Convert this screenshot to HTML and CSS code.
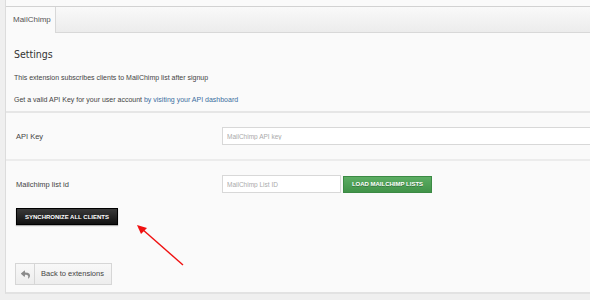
FILE: index.html
```html
<!DOCTYPE html>
<html lang="en">
<head>
	<meta charset="UTF-8">
	<title>MailChimp settings</title>
	<link rel="stylesheet" href="styles.css">
</head>
<body>
	<div class="panel">
		<div class="tabs">
			<span class="tab current">MailChimp</span>
		</div>

		<div class="intro">
			<h2>Settings</h2>
			<p>This extension subscribes clients to MailChimp list after signup</p>
			<p>Get a valid API Key for your user account <a href="#">by visiting your API dashboard</a></p>
		</div>

		<div class="row first">
			<label>API Key</label>
			<input class="wide" type="text" placeholder="MailChimp API key">
		</div>

		<div class="row last">
			<div class="line">
				<label>Mailchimp list id</label>
				<input class="short" type="text" placeholder="MailChimp List ID">
				<button class="btn green">LOAD MAILCHIMP LISTS</button>
			</div>
			<button class="btn black">SYNCHRONIZE ALL CLIENTS</button>

			<a class="back" href="#">
				<span class="ico">
					<svg width="9" height="9" viewBox="0 0 512 512"><path fill="#8a8a8a" d="M8.3 189.8L184.3 37.9C199.7 24.5 224 35.3 224 56v80.1c160.6 1.8 288 34 288 186.3 0 61.4-39.6 122.3-83.3 154.1-13.7 9.9-33.1-2.5-28.1-18.6 45.3-145-21.5-183.5-176.6-185.7V360c0 20.7-24.3 31.5-39.7 18.2l-176-152c-11.1-9.6-11.1-26.8 0-36.4z"/></svg>
				</span>
				<span class="txt">Back to extensions</span>
			</a>
		</div>

		<!-- red pointer drawn over the page -->
		<svg class="pointer" width="60" height="50" viewBox="0 0 60 50">
			<line x1="49" y1="45" x2="8" y2="9" stroke="#f01010" stroke-width="1.4"/>
			<path d="M3 5 L13 8 L7 14 Z" fill="#f01010"/>
		</svg>
	</div>
</body>
</html>
```

FILE: styles.css
```css
*{padding: 0;margin: 0;box-sizing: border-box;}
body{
	background: #efefef;
	font-family: "Liberation Sans", Arial, sans-serif;
	color: #333;
}
.panel{
	position: relative;
	margin-left: 5px;
	height: 294px;
	padding-top: 6px;
	background: #fafafa;
	border-left: 1px solid #dcdcdc;
	border-bottom: 2px solid #e2e2e2;
}

/* tab bar */
.tabs{
	height: 27px;
	border-top: 1px solid #d2d2d2;
	border-bottom: 1px solid #d8d8d8;
	background: linear-gradient(#f9f9f9, #ececec);
	display: flex;
}
.tabs .tab{
	width: 50px;
	height: 26px;
	padding-left: 7px;
	line-height: 25px;
	font-size: 8px;
	color: #555;
	background: #fafafa;
	border-right: 1px solid #d8d8d8;
}

/* settings text */
.intro{
	padding: 15px 8px 0 8px;
	height: 80px;
	border-bottom: 2px solid #e6e6e6;
}
.intro h2{
	font-family: "DejaVu Sans", sans-serif;
	font-stretch: condensed;
	font-weight: normal;
	font-size: 10.5px;
	color: #333;
	height: 25px;
}
.intro p{
	font-size: 7px;
	color: #444;
	height: 22px;
	line-height: 9px;
}
.intro p:last-child{
	height: 16px;
}
.intro a{
	color: #3a6ea0;
	text-decoration: none;
}

/* form rows */
.row{
	padding-left: 10px;
}
.row.first{
	display: flex;
	align-items: center;
	height: 48px;
	border-bottom: 2px solid #ececec;
}
.row label{
	width: 206px;
	font-size: 7.5px;
	color: #444;
}
.row input{
	height: 18px;
	padding-left: 4px;
	font-family: "Liberation Sans", Arial, sans-serif;
	font-size: 6.5px;
	background: #fff;
	border: 1px solid #d8d8d8;
	outline: none;
}
.row input::placeholder{
	color: #aaa;
}
.row input.wide{
	flex: 1;
	border-right: none;
}
.row input.short{
	width: 119px;
}
.row.last{
	padding-top: 14px;
}
.row .line{
	display: flex;
	align-items: center;
	height: 18px;
}

.btn{
	font-family: "Liberation Sans", Arial, sans-serif;
	font-weight: bold;
	font-size: 6px;
	color: #fff;
	cursor: pointer;
}
.btn.green{
	margin-left: 2px;
	width: 89px;
	height: 17px;
	background: linear-gradient(#5cad63, #419349);
	border: 1px solid #3b8a44;
	text-shadow: 0 1px 0 rgba(0,0,0,0.3);
}
.btn.black{
	display: block;
	margin-top: 15px;
	width: 102px;
	height: 17px;
	background: linear-gradient(#3a3a3a, #111);
	border: 1px solid #000;
	box-shadow: 0 1px 1px rgba(0,0,0,0.3);
}

/* back link */
.back{
	display: flex;
	margin-top: 38px;
	margin-left: -1px;
	width: 97px;
	height: 22px;
	text-decoration: none;
	border: 1px solid #d6d6d6;
	background: linear-gradient(#f8f8f8, #ededed);
}
.back .ico{
	width: 19px;
	display: flex;
	align-items: center;
	justify-content: center;
	border-right: 1px solid #d6d6d6;
}
.back .txt{
	padding-left: 6px;
	line-height: 20px;
	font-size: 7.5px;
	color: #444;
}

.pointer{
	position: absolute;
	left: 128px;
	top: 220px;
}
```
